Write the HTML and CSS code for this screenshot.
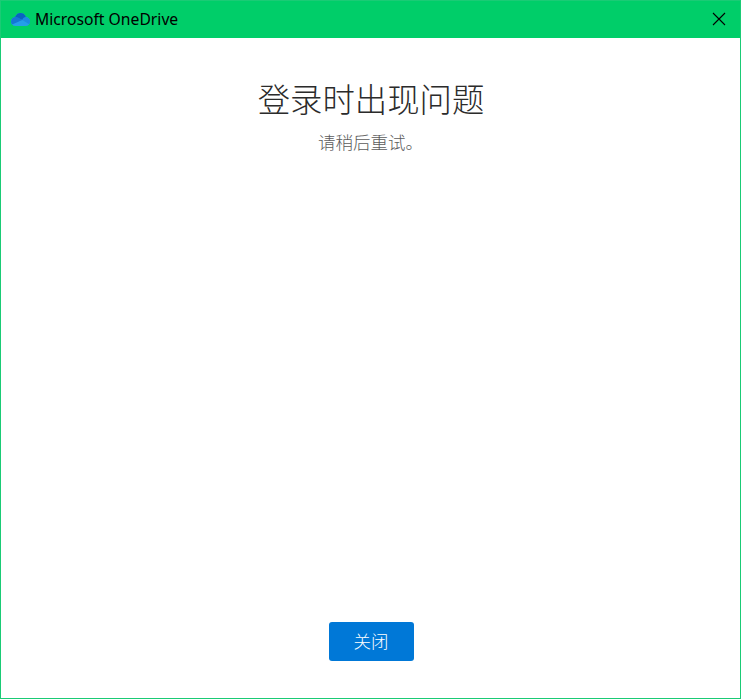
FILE: index.html
```html
<!DOCTYPE html>
<html lang="zh-CN">
<head>
<meta charset="utf-8">
<title>Microsoft OneDrive</title>
<link rel="stylesheet" href="styles.css">
</head>
<body>
<div class="window">
  <header class="titlebar">
    <svg class="logo" width="19" height="13" viewBox="0 0 19 13" aria-hidden="true">
      <path fill="#249fe9" d="M4.500 13C1.800 13 0 11.200 0 8.700 0 6.300 1.700 4.500 4 4.100 5 1.600 7 0 9.500 0c2.700 0 4.700 1.600 5.500 4.100 2.300.2 4 2 4 4.400C19 11.200 17.200 13 14.800 13z"/>
      <path fill="#0a63c0" d="M4 4.100C5 1.600 7 0 9.500 0c2.700 0 4.700 1.600 5.500 4.100L11.300 7z"/>
      <path fill="#1477d4" d="M4 4.100C1.700 4.500 0 6.300 0 8.700c0 1.100.4 2.100 1.100 2.900L11.300 7 8 4.900C6.700 4.100 5.300 3.900 4 4.100z"/>
      <path fill="#1b8be2" d="M15 4.100C13.200 4 11.900 5 11.300 7l6.900 4.200c.5-.7.800-1.600.8-2.700 0-2.400-1.700-4.200-4-4.400z"/>
    </svg>
    <span class="app-name">Microsoft OneDrive</span>
    <button class="dismiss" aria-label="关闭">
      <svg width="14" height="14" viewBox="0 0 14 14"><path d="M1 1 13 13M13 1 1 13" fill="none" stroke="#000" stroke-width="1.100"/></svg>
    </button>
  </header>
  <main class="content">
    <h1>登录时出现问题</h1>
    <p>请稍后重试。</p>
    <button class="primary">关闭</button>
  </main>
</div>
</body>
</html>
```
FILE: styles.css
```css
* { box-sizing: border-box; }
body { margin: 0; }
.window {
  height: 699px;
  display: flex;
  flex-direction: column;
  border: 1px solid #1acb75;
  background: #fff;
  font-family: "Noto Sans", "Noto Sans CJK SC", sans-serif;
}
.titlebar {
  height: 37px;
  flex: none;
  display: flex;
  align-items: center;
  padding: 0 14px 1px 10px;
  background: #00ce69;
}
.logo { margin-right: 5px; }
.app-name { font-size: 15.7px; line-height: 20px; color: #000; }
.dismiss { margin-left: auto; padding: 0; border: 0; background: none; display: flex; }
.content {
  flex: 1;
  display: flex;
  flex-direction: column;
  align-items: center;
  padding: 37px 0 37px 1px;
}
h1 {
  margin: 0;
  font-size: 32.4px;
  line-height: 46px;
  font-weight: 300;
  font-family: "Noto Sans CJK SC", sans-serif;
  color: #2b2b2b;
}
p {
  margin: 8px 1px 0 0;
  font-size: 17.5px;
  line-height: 26px;
  font-weight: 300;
  font-family: "Noto Sans CJK SC", sans-serif;
  color: #5c5c5c;
}
.primary {
  width: 85px;
  height: 39px;
  margin-top: auto;
  padding: 0 0 2px;
  border: 0;
  border-radius: 3px;
  background: #0078d7;
  color: #fff;
  font: 300 17.5px/37px "Noto Sans CJK SC", sans-serif;
}
```
